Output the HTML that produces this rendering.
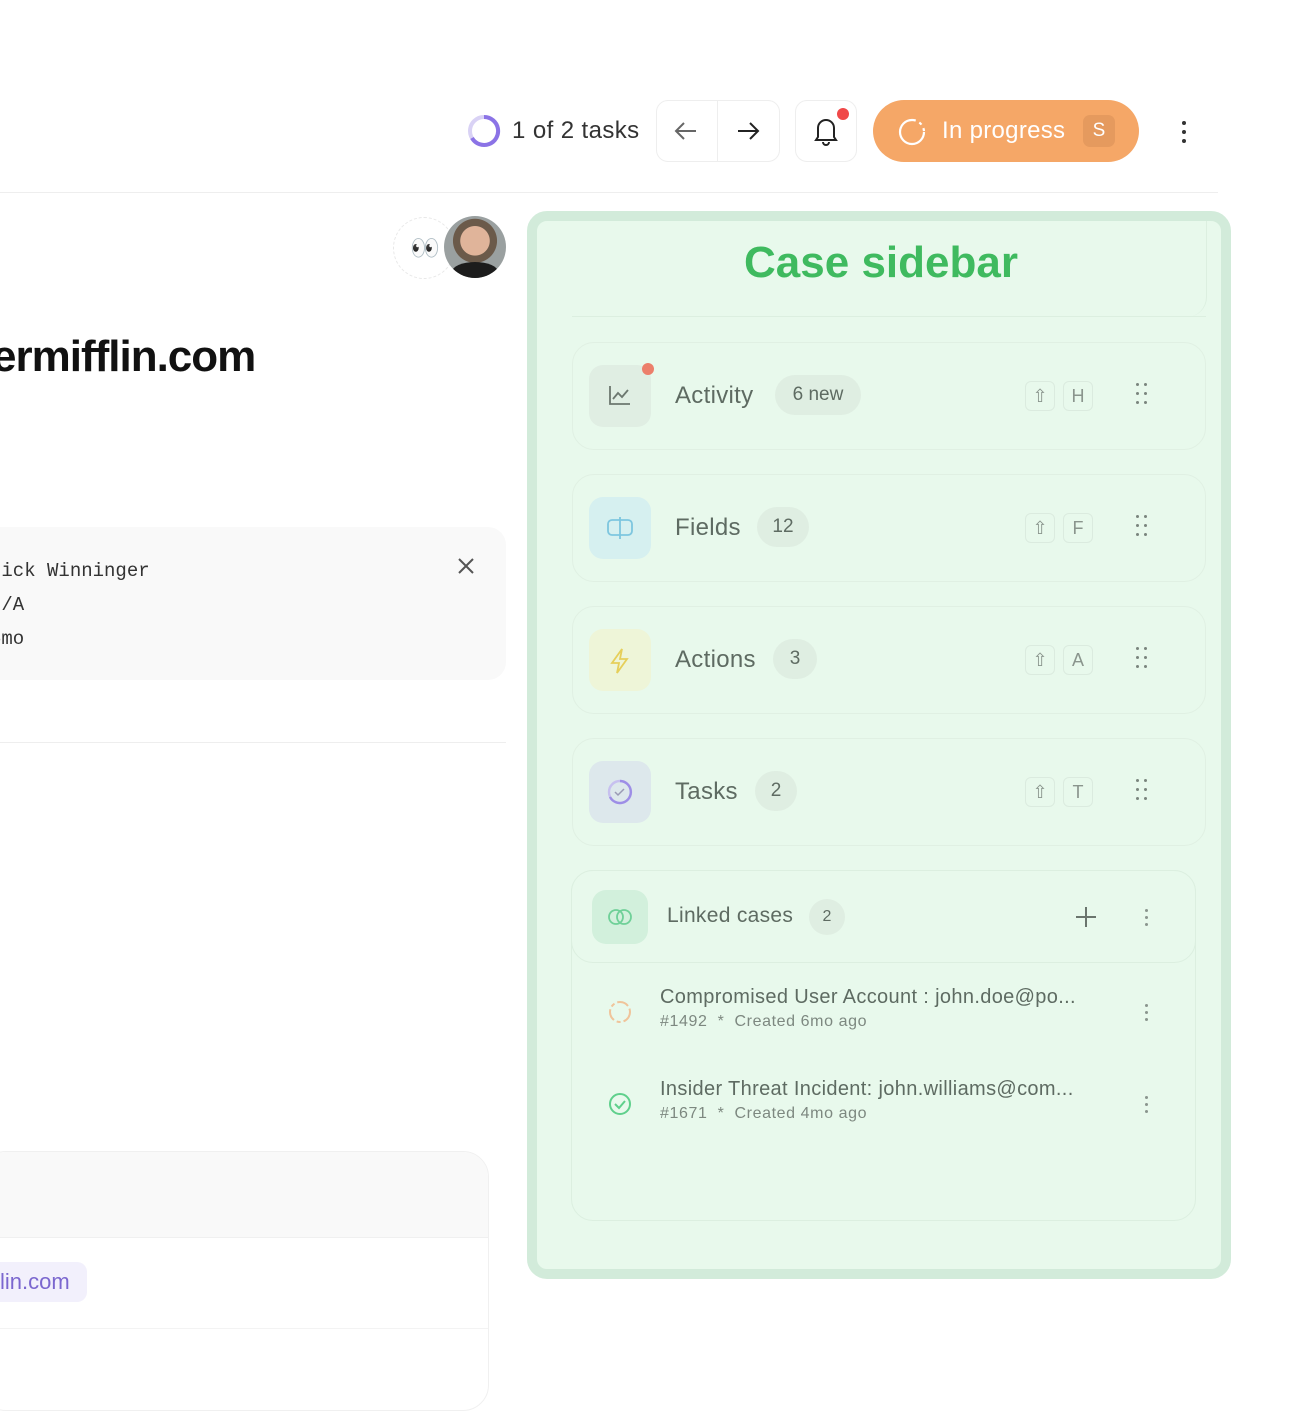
<!DOCTYPE html>
<html><head><meta charset="utf-8"><style>
*{box-sizing:border-box;margin:0;padding:0}
body{width:1300px;height:1390px;background:#fff;font-family:"Liberation Sans",sans-serif;position:relative;overflow:hidden;color:#222}
.a{position:absolute}
.btn{border:1px solid #eee;border-radius:12px;background:#fff}
.row{position:absolute;left:572px;width:634px;height:108px;border:1px solid #e0f0e3;border-radius:22px}
.ic{position:absolute;left:16px;top:22px;width:62px;height:62px;border-radius:14px}
.lbl{position:absolute;left:102px;top:39px;font-size:24px;color:#5e6b62;letter-spacing:0.3px}
.pill{position:absolute;top:32px;height:40px;border-radius:20px;background:#dfeee2;font-size:19px;color:#5e6b62;line-height:40px;text-align:center}
.kb{position:absolute;top:38px;width:30px;height:30px;border:1px solid #dbebdf;border-radius:6px;font-size:18px;color:#8a958d;text-align:center;line-height:28px}
.dots{position:absolute;left:562px;top:40px;width:14px;height:22px}
.dots i{position:absolute;width:3px;height:3px;background:#7a857d;border-radius:50%}
</style></head><body>
<!-- header -->
<svg class="a" style="left:466px;top:113px" width="36" height="36"><circle cx="18" cy="18" r="14" fill="none" stroke="#d9d2f5" stroke-width="4"/><path d="M18 4 A14 14 0 1 1 6 25" fill="none" stroke="#8b73e6" stroke-width="4"/></svg>
<div class="a" style="left:512px;top:117px;font-size:24px;color:#333;letter-spacing:0.4px">1 of 2 tasks</div>
<div class="a btn" style="left:656px;top:100px;width:124px;height:62px"></div>
<div class="a" style="left:717px;top:101px;width:1px;height:60px;background:#eee"></div>
<svg class="a" style="left:672px;top:117px" width="28" height="28" fill="none" stroke="#666" stroke-width="2"><path d="M24 14H4M12 6L4 14l8 8"/></svg>
<svg class="a" style="left:734px;top:117px" width="28" height="28" fill="none" stroke="#222" stroke-width="2"><path d="M4 14h20M16 6l8 8-8 8"/></svg>
<div class="a btn" style="left:795px;top:100px;width:62px;height:62px"></div>
<svg class="a" style="left:811px;top:115px" width="30" height="32" fill="none" stroke="#222" stroke-width="2"><path d="M7 22V13a8 8 0 0 1 16 0v9l2 3H5z M12 27a3 3 0 0 0 6 0"/></svg>
<div class="a" style="left:837px;top:108px;width:12px;height:12px;border-radius:50%;background:#f04848"></div>
<div class="a" style="left:873px;top:100px;width:266px;height:62px;border-radius:31px;background:#f5a767"></div>
<svg class="a" style="left:896px;top:116px" width="32" height="32" fill="none" stroke="#fff" stroke-width="2.2"><circle cx="16" cy="16" r="12" stroke-dasharray="60 4 3 4 3 4"/></svg>
<div class="a" style="left:942px;top:117px;font-size:24px;color:#fff;letter-spacing:0.3px">In progress</div>
<div class="a" style="left:1083px;top:115px;width:32px;height:32px;border-radius:7px;background:#e59a5e;color:#fff;font-size:19px;text-align:center;line-height:32px">S</div>
<div class="a" style="left:1182px;top:121px;width:4px;height:4px;border-radius:50%;background:#333;box-shadow:0 9px 0 #333,0 18px 0 #333"></div>
<div class="a" style="left:0;top:192px;width:1218px;height:1px;background:#eee"></div>
<!-- left content -->
<div class="a" style="left:393px;top:217px;width:62px;height:62px;border-radius:50%;border:1px dashed #e8e8e8"></div>
<div class="a" style="left:410px;top:234px;font-size:24px;color:#555">👀</div>
<div class="a" style="left:444px;top:216px;width:62px;height:62px;border-radius:50%;background:radial-gradient(circle at 50% 40%,#e0b49a 0 30%,#6b5a4a 31% 45%,#9aa0a0 46%);overflow:hidden"><div style="position:absolute;left:8px;top:46px;width:46px;height:20px;border-radius:50%;background:#1c1c1c"></div></div>
<div class="a" style="left:-8px;top:332px;font-size:44px;font-weight:bold;color:#111;letter-spacing:-1px">ermifflin.com</div>
<div class="a" style="left:-20px;top:527px;width:526px;height:153px;border-radius:18px;background:#f9f9f9"></div>
<div class="a" style="left:-10px;top:554px;font-family:'Liberation Mono',monospace;font-size:19px;color:#333;line-height:34px">rick Winninger<br>N/A<br>6mo</div>
<svg class="a" style="left:456px;top:556px" width="20" height="20" stroke="#555" stroke-width="2"><path d="M3 3l14 14M17 3L3 17"/></svg>
<div class="a" style="left:0;top:742px;width:506px;height:1px;background:#eee"></div>
<div class="a" style="left:-20px;top:1151px;width:509px;height:260px;border-radius:26px;border:1px solid #f0f0f0;background:#fff;overflow:hidden"><div style="height:86px;background:#f9f9f9;border-bottom:1px solid #f0f0f0"></div><div style="height:91px;border-bottom:1px solid #f3f3f3"></div></div>
<div class="a" style="left:-20px;top:1262px;width:107px;height:40px;border-radius:10px;background:#f2f0fc"></div>
<div class="a" style="left:0;top:1269px;font-size:22px;color:#7b67cf">lin.com</div>
<!-- sidebar -->
<div class="a" style="left:527px;top:211px;width:704px;height:1068px;border:10px solid #d2ebda;border-radius:20px;background:#e8f9ec"></div>
<div class="a" style="left:537px;top:221px;width:670px;height:96px;border-right:1px solid #dcefe0;border-radius:0 0 20px 0"></div>
<div class="a" style="left:572px;top:316px;width:634px;height:1px;background:#dcefe0"></div>
<div class="a" style="left:527px;top:238px;width:704px;text-align:center;font-size:44px;font-weight:bold;color:#3fba5f;padding-left:4px">Case sidebar</div>

<div class="row" style="top:342px">
<div class="ic" style="background:#e0eee3"></div>
<svg class="a" style="left:34px;top:40px" width="26" height="24" fill="none" stroke="#6c776f" stroke-width="1.8"><path d="M3 3v18h20M6 16l5-6 4 4 6-7"/></svg>
<div class="a" style="left:69px;top:20px;width:12px;height:12px;border-radius:50%;background:#ec7f6b"></div>
<div class="lbl">Activity</div><div class="pill" style="left:202px;width:86px">6 new</div>
<div class="kb" style="left:452px">⇧</div><div class="kb" style="left:490px">H</div>
<div class="dots"><i style="left:1px;top:0"></i><i style="left:9px;top:0"></i><i style="left:1px;top:9px"></i><i style="left:9px;top:9px"></i><i style="left:1px;top:18px"></i><i style="left:9px;top:18px"></i></div>
</div>
<div class="row" style="top:474px">
<div class="ic" style="background:#d6f0f0"></div>
<svg class="a" style="left:32px;top:41px" width="30" height="24" fill="none" stroke="#7ec6df" stroke-width="1.8"><rect x="3" y="4" width="24" height="15" rx="4"/><path d="M15 1v22"/></svg>
<div class="lbl">Fields</div><div class="pill" style="left:184px;width:52px">12</div>
<div class="kb" style="left:452px">⇧</div><div class="kb" style="left:490px">F</div>
<div class="dots"><i style="left:1px;top:0"></i><i style="left:9px;top:0"></i><i style="left:1px;top:9px"></i><i style="left:9px;top:9px"></i><i style="left:1px;top:18px"></i><i style="left:9px;top:18px"></i></div>
</div>
<div class="row" style="top:606px">
<div class="ic" style="background:#eef5d8"></div>
<svg class="a" style="left:36px;top:40px" width="22" height="28" fill="none" stroke="#e6cf5a" stroke-width="1.8"><path d="M13 2L3 16h7l-2 10 10-14h-7z"/></svg>
<div class="lbl">Actions</div><div class="pill" style="left:200px;width:44px">3</div>
<div class="kb" style="left:452px">⇧</div><div class="kb" style="left:490px">A</div>
<div class="dots"><i style="left:1px;top:0"></i><i style="left:9px;top:0"></i><i style="left:1px;top:9px"></i><i style="left:9px;top:9px"></i><i style="left:1px;top:18px"></i><i style="left:9px;top:18px"></i></div>
</div>
<div class="row" style="top:738px">
<div class="ic" style="background:#dde8ec"></div>
<svg class="a" style="left:33px;top:39px" width="28" height="28" fill="none" stroke-width="2.4"><circle cx="14" cy="14" r="11" stroke="#c7c0ef"/><path d="M14 3a11 11 0 1 1-10 16" stroke="#9d8ee6"/><path d="M9 14l3 3 6-6" stroke="#9a9ab5" stroke-width="1.5"/></svg>
<div class="lbl">Tasks</div><div class="pill" style="left:182px;width:42px">2</div>
<div class="kb" style="left:452px">⇧</div><div class="kb" style="left:490px">T</div>
<div class="dots"><i style="left:1px;top:0"></i><i style="left:9px;top:0"></i><i style="left:1px;top:9px"></i><i style="left:9px;top:9px"></i><i style="left:1px;top:18px"></i><i style="left:9px;top:18px"></i></div>
</div>
<!-- linked cases -->
<div class="a" style="left:571px;top:870px;width:625px;height:351px;border:1px solid #dcefe0;border-radius:22px"></div>
<div class="a" style="left:571px;top:870px;width:625px;height:93px;border:1px solid #dcefe0;border-radius:22px;background:#e8f9ec"></div>
<div class="a" style="left:592px;top:890px;width:56px;height:54px;border-radius:14px;background:#d2f0dc"></div>
<svg class="a" style="left:605px;top:905px" width="30" height="24" fill="none" stroke="#6fd098" stroke-width="1.8"><circle cx="11" cy="12" r="7"/><circle cx="19" cy="12" r="7"/></svg>
<div class="a" style="left:667px;top:904px;font-size:21px;color:#5e6b62;letter-spacing:0.3px">Linked cases</div>
<div class="a" style="left:809px;top:899px;width:36px;height:36px;border-radius:50%;background:#dfeee2;font-size:16px;color:#5e6b62;text-align:center;line-height:36px">2</div>
<svg class="a" style="left:1074px;top:905px" width="24" height="24" stroke="#6a756d" stroke-width="2"><path d="M12 2v20M2 12h20"/></svg>
<div class="a" style="left:1145px;top:909px;width:3px;height:3px;border-radius:50%;background:#8a958d;box-shadow:0 7px 0 #8a958d,0 14px 0 #8a958d"></div>
<svg class="a" style="left:607px;top:999px" width="26" height="26" fill="none" stroke="#f0c49a" stroke-width="2"><circle cx="13" cy="13" r="10" stroke-dasharray="12 3 4 3"/></svg>
<div class="a" style="left:660px;top:986px;font-size:20px;color:#5e6b62;letter-spacing:0.35px">Compromised User Account : john.doe@po...</div>
<div class="a" style="left:660px;top:1013px;font-size:16px;color:#7d8880;letter-spacing:0.6px">#1492 &nbsp;*&nbsp; Created 6mo ago</div>
<div class="a" style="left:1145px;top:1004px;width:3px;height:3px;border-radius:50%;background:#8a958d;box-shadow:0 7px 0 #8a958d,0 14px 0 #8a958d"></div>
<svg class="a" style="left:607px;top:1091px" width="26" height="26" fill="none" stroke="#5fd08c" stroke-width="2"><circle cx="13" cy="13" r="10"/><path d="M8 13l4 4 6-7"/></svg>
<div class="a" style="left:660px;top:1078px;font-size:20px;color:#5e6b62;letter-spacing:0.35px">Insider Threat Incident: john.williams@com...</div>
<div class="a" style="left:660px;top:1105px;font-size:16px;color:#7d8880;letter-spacing:0.6px">#1671 &nbsp;*&nbsp; Created 4mo ago</div>
<div class="a" style="left:1145px;top:1096px;width:3px;height:3px;border-radius:50%;background:#8a958d;box-shadow:0 7px 0 #8a958d,0 14px 0 #8a958d"></div>
</body></html>
